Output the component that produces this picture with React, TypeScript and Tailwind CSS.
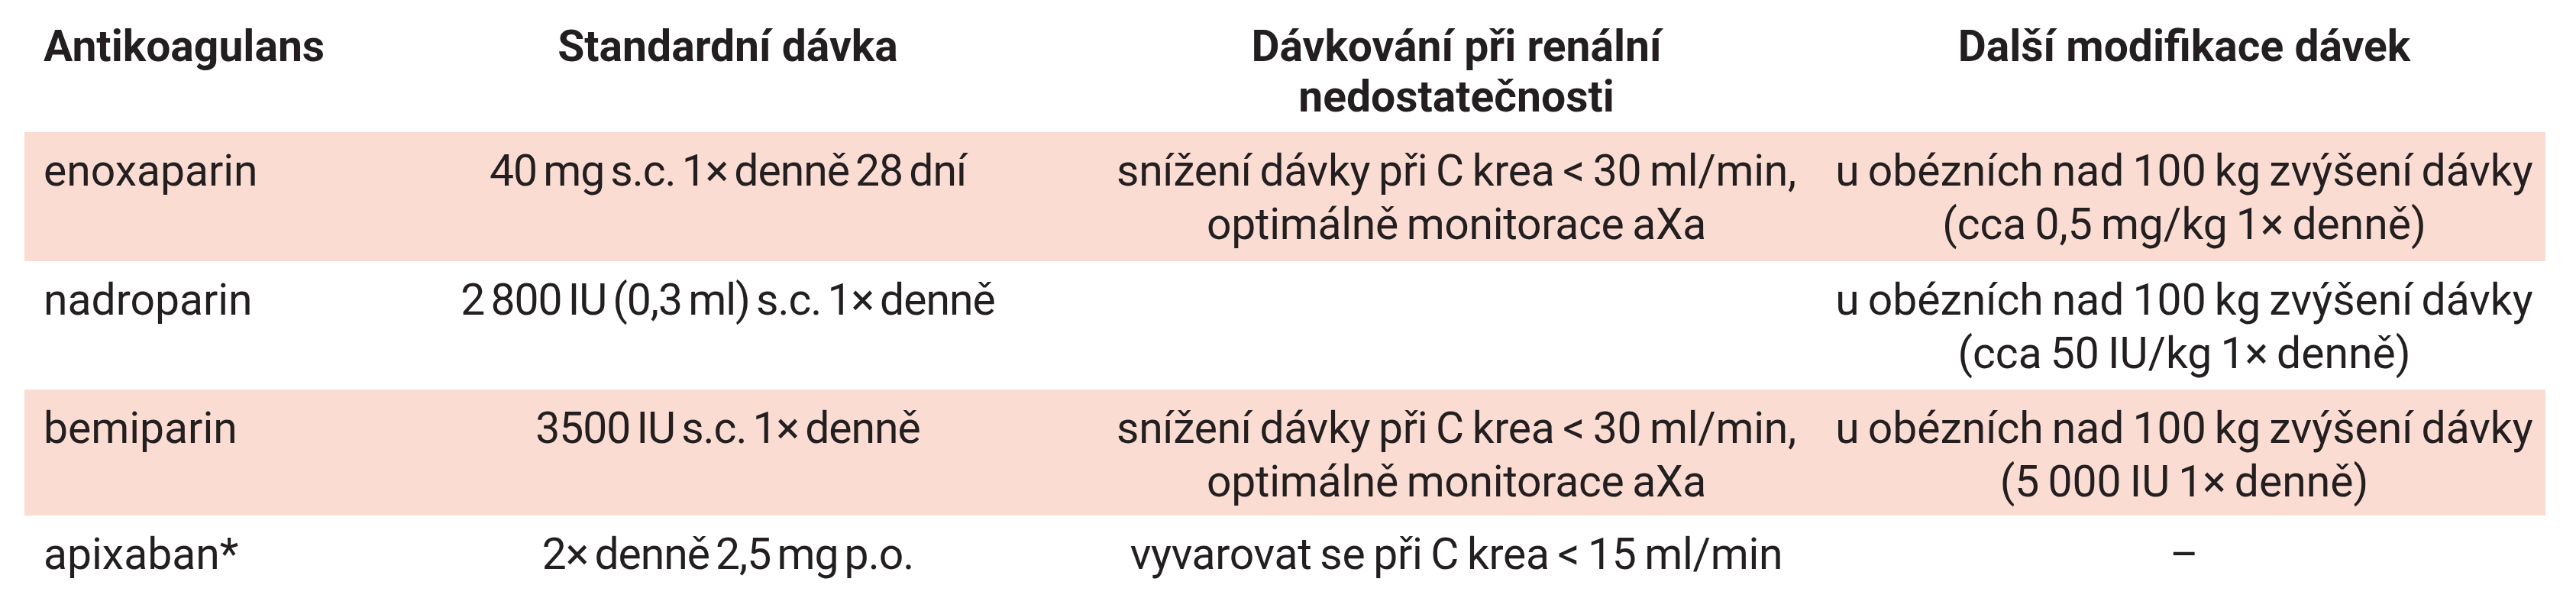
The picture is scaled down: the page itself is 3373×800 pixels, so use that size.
import React from 'react'

interface Row {
	name: string
	dose: string[]
	renal: string[]
	other: string[]
	pink: boolean
	height: string
}

const rows: Row[] = [
	{
		name: 'enoxaparin',
		dose: ['40 mg s.c. 1× denně 28 dní'],
		renal: ['snížení dávky při C krea < 30 ml/min,', 'optimálně monitorace aXa'],
		other: ['u obézních nad 100 kg zvýšení dávky', '(cca 0,5 mg/kg 1× denně)'],
		pink: true,
		height: 'h-[169px]',
	},
	{
		name: 'nadroparin',
		dose: ['2 800 IU (0,3 ml) s.c. 1× denně'],
		renal: [],
		other: ['u obézních nad 100 kg zvýšení dávky', '(cca 50 IU/kg 1× denně)'],
		pink: false,
		height: 'h-[168px]',
	},
	{
		name: 'bemiparin',
		dose: ['3500 IU s.c. 1× denně'],
		renal: ['snížení dávky při C krea < 30 ml/min,', 'optimálně monitorace aXa'],
		other: ['u obézních nad 100 kg zvýšení dávky', '(5 000 IU 1× denně)'],
		pink: true,
		height: 'h-[165px]',
	},
	{
		name: 'apixaban*',
		dose: ['2× denně 2,5 mg p.o.'],
		renal: ['vyvarovat se při C krea < 15 ml/min'],
		other: ['–'],
		pink: false,
		height: 'h-[125px]',
	},
]

const Lines: React.FC<{ lines: string[] }> = ({ lines }) => (
	<>
		{lines.map((l, i) => (
			<div key={i} className="whitespace-nowrap">
				{l}
			</div>
		))}
	</>
)

export default function App() {
	return (
		<div
			className="w-[3373px] h-[800px] bg-white text-[#231f20] overflow-hidden"
			style={{ fontFamily: 'Roboto, "Liberation Sans", sans-serif' }}
		>
			<div className="ml-[32px] w-[3301px]">
				{/* header */}
				<div className="grid grid-cols-[447px_948px_960px_946px] h-[173px] pt-[28px] text-[57px] leading-[66px] font-bold">
					<div className="pl-[25px]">Antikoagulans</div>
					<div className="text-center">Standardní dávka</div>
					<div className="text-center">
						<Lines lines={['Dávkování při renální', 'nedostatečnosti']} />
					</div>
					<div className="text-center">Další modifikace dávek</div>
				</div>

				{rows.map((r) => (
					<div
						key={r.name}
						className={`grid grid-cols-[447px_948px_960px_946px] ${r.height} pt-[16px] text-[57px] leading-[70px] [word-spacing:-3px] ${r.pink ? 'bg-[#fadcd2]' : 'bg-white'}`}
					>
						<div className="pl-[25px] whitespace-nowrap">{r.name}</div>
						<div className="text-center tracking-[-1px] [word-spacing:-5px]">
							<Lines lines={r.dose} />
						</div>
						<div className="text-center tracking-[-0.3px]">
							<Lines lines={r.renal} />
						</div>
						<div className="text-center">
							<Lines lines={r.other} />
						</div>
					</div>
				))}
			</div>
		</div>
	)
}
